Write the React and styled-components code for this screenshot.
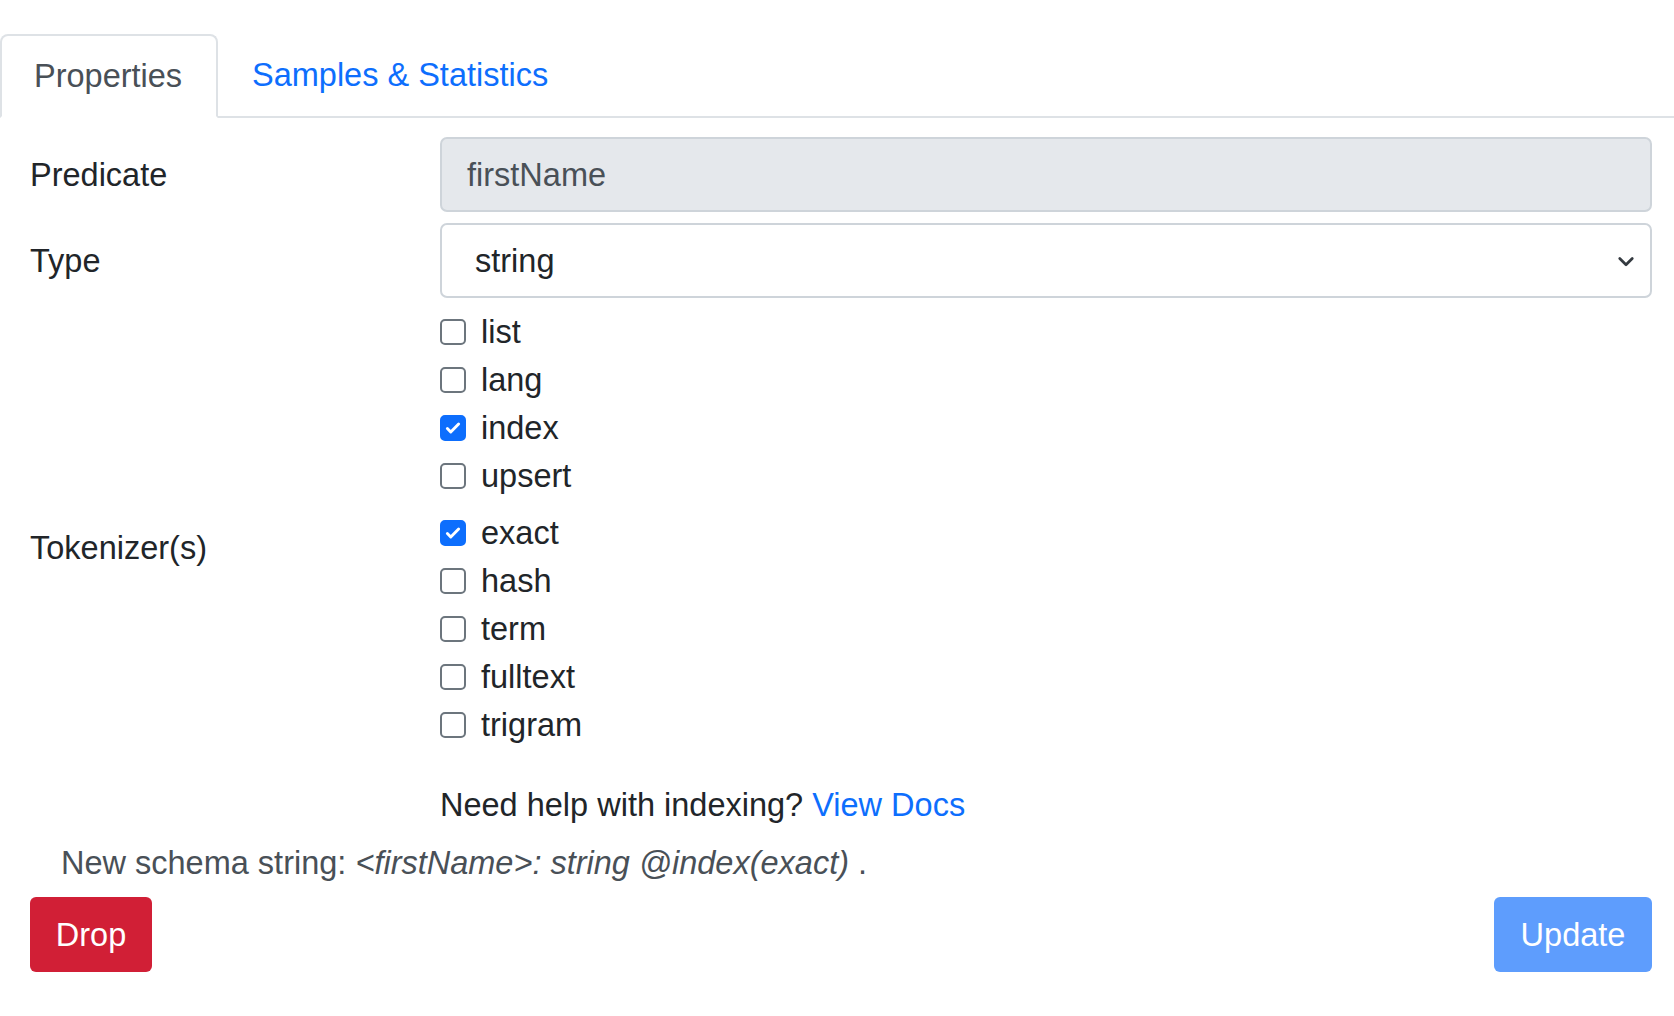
import React from "react";
import styled, { createGlobalStyle } from "styled-components";

const G = createGlobalStyle`
  body { margin: 0; background: #fff; font-family: "Liberation Sans", Arial, sans-serif; color: #212529; }
`;
const Wrap = styled.div` width: 1674px; padding-top: 34px; font-size: 32.5px; line-height: 40px; `;
const Tabs = styled.div` display: flex; border-bottom: 2px solid #dee2e6; height: 82px; `;
const Tab = styled.div`
  display: flex; align-items: center; padding: 0 34px; height: 82px; box-sizing: border-box;
  color: ${p => p.active ? "#495057" : "#0d6efd"};
  ${p => p.active ? "border: 2px solid #dee2e6; border-bottom-color: #fff; border-radius: 8px 8px 0 0; background:#fff; margin-bottom:-2px; height:84px; width:218px; padding:0 0 0 32px;" : ""}
`;
const Body = styled.div` padding: 19px 22px 0 30px; `;
const Row = styled.div` display: grid; grid-template-columns: 410px 1fr; align-items: ${p => p.start ? "start" : "center"}; margin-bottom: ${p => p.mb || 0}px; `;
const Label = styled.span` margin-top: ${p => p.mt || 0}px; `;
const Field = styled.div`
  height: 75px; box-sizing: border-box; border: 2px solid #ced4da; border-radius: 7px;
  display: flex; align-items: center; justify-content: space-between;
  padding: 0 14px 0 ${p => p.pl}px; background: ${p => p.bg || "#fff"}; color: ${p => p.bg ? "#495057" : "#212529"};
`;
const Checks = styled.div` display: flex; flex-direction: column; `;
const Check = styled.label` display: flex; align-items: center; gap: 15px; height: 48px; `;
const Box = styled.span`
  width: 26px; height: 26px; box-sizing: border-box; border-radius: 5px; flex: none;
  border: 2px solid ${p => p.on ? "#0d6efd" : "#6c757d"}; background: ${p => p.on ? "#0d6efd" : "#fff"};
  display: flex; align-items: center; justify-content: center;
`;
const Help = styled.div` padding-left: 410px; margin-top: 36px; `;
const Link = styled.span` color: #0d6efd; `;
const Schema = styled.div` color: #495057; margin: 18px 0 0 31px; em{font-style: italic;} `;
const Buttons = styled.div` display: flex; justify-content: space-between; margin-top: 14px; `;
const Btn = styled.div`
  height: 75px; width: ${p => p.w}px; display: flex; align-items: center; justify-content: center; border-radius: 6px;
  color: #fff; background: ${p => p.bg};
`;

const C = ({ label, on }) => (
  <Check>
    <Box on={on}>{on && <svg width="18" height="18" viewBox="0 0 16 16"><path d="M3 8.5l3 3 7-7" fill="none" stroke="#fff" strokeWidth="2.6" strokeLinecap="round" strokeLinejoin="round"/></svg>}</Box>
    {label}
  </Check>
);

export default function App() {
  return (
    <Wrap>
      <G />
      <Tabs>
        <Tab active>Properties</Tab>
        <Tab>Samples &amp; Statistics</Tab>
      </Tabs>
      <Body>
        <Row mb={11}><span>Predicate</span><Field pl={25} bg="#e5e8ec">firstName</Field></Row>
        <Row mb={10}><span>Type</span>
          <Field pl={33}>string
            <svg width="20" height="20" viewBox="0 0 16 16"><path d="M3 6l5 5 5-5" fill="none" stroke="#343a40" strokeWidth="2.2" strokeLinecap="round" strokeLinejoin="round"/></svg>
          </Field>
        </Row>
        <Row mb={9}><span /><Checks><C label="list"/><C label="lang"/><C label="index" on/><C label="upsert"/></Checks></Row>
        <Row start><Label mt={19}>Tokenizer(s)</Label><Checks><C label="exact" on/><C label="hash"/><C label="term"/><C label="fulltext"/><C label="trigram"/></Checks></Row>
        <Help>Need help with indexing? <Link>View Docs</Link></Help>
        <Schema>New schema string: <em>&lt;firstName&gt;: string @index(exact)</em> .</Schema>
        <Buttons><Btn w={122} bg="#d11f36">Drop</Btn><Btn w={158} bg="#5e9dfd">Update</Btn></Buttons>
      </Body>
    </Wrap>
  );
}
